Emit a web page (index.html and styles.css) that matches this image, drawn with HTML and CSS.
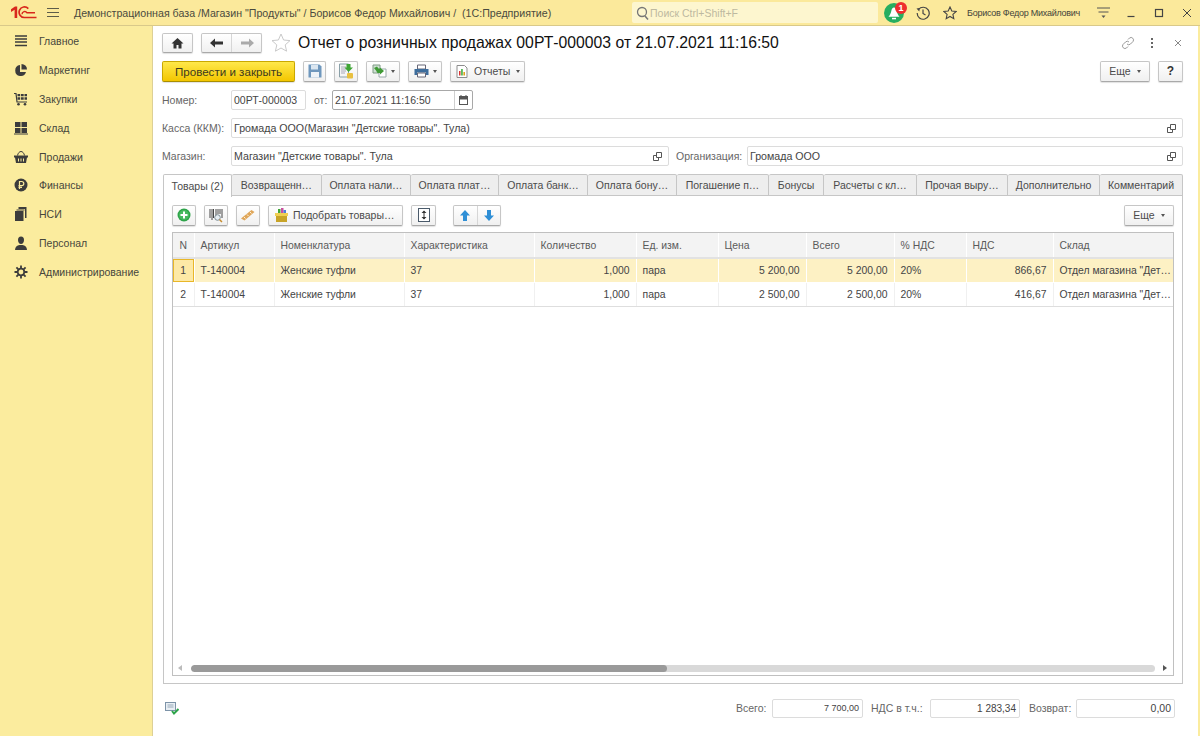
FILE: index.html
```html
<!DOCTYPE html>
<html lang="ru">
<head>
<meta charset="utf-8">
<title>Отчет о розничных продажах</title>
<link rel="stylesheet" href="styles.css">
</head>
<body>
<header class="topbar">
  <svg class="logo" width="26" height="13" viewBox="0 0 26 13"><path d="M0 3.200L4 .5h2.200V12H3.600V3.700L0 6z" fill="#d8281c"/><path d="M17.300 2.600A5.300 5.300 0 1 0 13.500 11.500H25.500" fill="none" stroke="#d8281c" stroke-width="1.700"/><path d="M11 8.200A2.700 2.700 0 0 1 16 6.800 H24" fill="none" stroke="#d8281c" stroke-width="1.400"/></svg>
  <svg class="burger" width="12" height="9" viewBox="0 0 12 9"><path d="M0 .5h12M0 4.500h12M0 8.500h12" stroke="#5c5c4a" stroke-width="1"/></svg>
  <div class="apptitle">Демонстрационная база /Магазин "Продукты" / Борисов Федор Михайлович /  (1С:Предприятие)</div>
  <div class="search">
    <svg width="13" height="14" viewBox="0 0 13 14"><circle cx="6" cy="6" r="4.500" fill="none" stroke="#777" stroke-width="1.300"/><path d="M9 10l3 3.500" stroke="#777" stroke-width="1.500"/></svg>
    <span>Поиск Ctrl+Shift+F</span>
  </div>
  <div class="bell">
    <svg width="20" height="20" viewBox="0 0 20 20"><circle cx="10" cy="10" r="10" fill="#27ae60"/><path d="M10 4.500c-1.500 0-2.300 1.500-2.700 3.500S6 12 4.500 13.800h11C14 12 13.100 10 12.700 8S11.500 4.500 10 4.500z" fill="#fff"/><rect x="8" y="14.800" width="4" height="1.500" fill="#fff"/></svg>
    <span class="badge">1</span>
  </div>
  <svg class="tbicon hist" width="14" height="14" viewBox="0 0 14 14"><path d="M2.500 3.500a6 6 0 1 1-1.300 3.500" fill="none" stroke="#444" stroke-width="1.200"/><path d="M.5 2.500L3.800 2l-.5 3.500z" fill="#444"/><path d="M7 3.500V7.500l2.500 1.500" fill="none" stroke="#444" stroke-width="1.200"/></svg>
  <svg class="tbicon fav" width="14" height="14" viewBox="0 0 14 14"><path d="M7 1l1.800 4 4.400.5-3.300 2.900.9 4.300L7 10.500l-3.800 2.200.9-4.300L.8 5.500 5.200 5z" fill="none" stroke="#444" stroke-width="1.100"/></svg>
  <div class="user">Борисов Федор Михайлович</div>
  <svg class="tbicon menu" width="13" height="12" viewBox="0 0 13 12"><path d="M0 1h13M1.500 5h10" stroke="#555" stroke-width="1"/><path d="M4.500 8.500h4L6.500 11z" fill="#555"/></svg>
  <svg class="tbicon min" width="10" height="10" viewBox="0 0 10 10"><path d="M1.500 8.500h7" stroke="#444" stroke-width="1.200"/></svg>
  <svg class="tbicon max" width="10" height="10" viewBox="0 0 10 10"><rect x="1.500" y="1.500" width="7" height="7" fill="none" stroke="#444" stroke-width="1.200"/></svg>
  <svg class="tbicon cls" width="10" height="10" viewBox="0 0 10 10"><path d="M1 1l8 8M9 1L1 9" stroke="#444" stroke-width="1"/></svg>
</header>

<div class="shell">
  <nav class="side">
    <a class="navitem"><svg width="14" height="14" viewBox="0 0 14 14"><path d="M1 2h12M1 5h12M1 8h12M1 11.500h12" stroke="#3c3c3c" stroke-width="1.600"/></svg><span>Главное</span></a>
    <a class="navitem"><svg width="14" height="14" viewBox="0 0 14 14"><path d="M6 2a5.500 5.500 0 1 0 6 7H6z" fill="#3c3c3c"/><path d="M7.500 1a5.500 5.500 0 0 1 5.500 5.500H7.500z" fill="#3c3c3c"/></svg><span>Маркетинг</span></a>
    <a class="navitem"><svg width="14" height="14" viewBox="0 0 14 14"><path d="M0 1.500h2l1 8.500h10" fill="none" stroke="#3c3c3c" stroke-width="1.200"/><path d="M3.500 2h2.700v2.300H3.500zM7 2h2.700v2.300H7zM10.500 2H13v2.300h-2.500zM3.500 5.200h2.700v2.600H3.500zM7 5.200h2.700v2.600H7zM10.500 5.200H13v2.600h-2.500z" fill="#3c3c3c"/><circle cx="4.500" cy="12.200" r="1.300" fill="#3c3c3c"/><circle cx="11" cy="12.200" r="1.300" fill="#3c3c3c"/></svg><span>Закупки</span></a>
    <a class="navitem"><svg width="14" height="14" viewBox="0 0 14 14"><path d="M1 1h5.500v5H1zM7.500 1H13v5H7.500zM1 7h5.500v5H1zM7.500 7H13v5H7.500z" fill="#3c3c3c"/><path d="M0 13h14" stroke="#3c3c3c"/></svg><span>Склад</span></a>
    <a class="navitem"><svg width="14" height="14" viewBox="0 0 14 14"><path d="M3.500 5.500C4 3 5.500 1.500 7 1.500S10 3 10.500 5.500" fill="none" stroke="#3c3c3c"/><path d="M0 5.500h14v2H13L12 13H2L1 7.500H0z" fill="#3c3c3c"/><path d="M4.500 8.500v3M7 8.500v3M9.500 8.500v3" stroke="#fbec9e"/></svg><span>Продажи</span></a>
    <a class="navitem"><svg width="14" height="14" viewBox="0 0 14 14"><circle cx="7" cy="7" r="6.500" fill="#3c3c3c"/><path d="M5.500 11V3.500h2.200a2 2 0 0 1 0 4.200H4.500M4.500 9.300h3.500" fill="none" stroke="#fbec9e" stroke-width="1.200"/></svg><span>Финансы</span></a>
    <a class="navitem"><svg width="14" height="14" viewBox="0 0 14 14"><path d="M4.500 0h8v11H11V2H4.500z" fill="#3c3c3c"/><path d="M2.500 2.500h8v1h-8z" fill="#3c3c3c"/><path d="M1 4h8.500v10H1z" fill="#3c3c3c"/></svg><span>НСИ</span></a>
    <a class="navitem"><svg width="14" height="14" viewBox="0 0 14 14"><path d="M4 4a3 3.500 0 0 1 6 0c0 2-1 4-3 4S4 6 4 4z" fill="#3c3c3c"/><path d="M1 14c0-3 2-4.500 4.500-5h3C11 9.500 13 11 13 14z" fill="#3c3c3c"/></svg><span>Персонал</span></a>
    <a class="navitem"><svg width="14" height="14" viewBox="0 0 14 14"><circle cx="7" cy="7" r="3.300" fill="none" stroke="#3c3c3c" stroke-width="1.800"/><path d="M7 .5v3M7 10.500v3M.5 7h3M10.500 7h3M2.400 2.400l2 2M9.600 9.600l2 2M11.600 2.400l-2 2M4.400 9.600l-2 2" stroke="#3c3c3c" stroke-width="1.800"/></svg><span>Администрирование</span></a>
  </nav>

  <main class="form">
    <div class="titlerow">
      <button class="btn iconbtn home"><svg width="13" height="12" viewBox="0 0 13 12"><path d="M6.500 1L.5 6.500h2V11.500h3V8h2v3.500h3V6.500h2z" fill="#333"/></svg></button>
      <div class="btn pair">
        <span class="seg"><svg width="14" height="10" viewBox="0 0 14 10"><path d="M0 5l5-4.500v3h8v3H5v3z" fill="#333"/></svg></span>
        <span class="seg"><svg width="14" height="10" viewBox="0 0 14 10"><path d="M14 5L9 .5v3H1v3h8v3z" fill="#aaa"/></svg></span>
      </div>
      <svg class="titlestar" width="20" height="19" viewBox="0 0 20 19"><path d="M10 1l2.600 6 6.400.6-4.800 4.300 1.400 6.300L10 15l-5.600 3.200 1.400-6.300L1 7.600 7.400 7z" fill="#fff" stroke="#c9c9c9"/></svg>
      <h1>Отчет о розничных продажах 00РТ-000003 от 21.07.2021 11:16:50</h1>
      <div class="winctl">
        <svg class="wlink" width="14" height="14" viewBox="0 0 14 14"><path d="M6 8a2.500 2.500 0 0 0 3.500 0l2.500-2.500A2.500 2.500 0 0 0 8.500 2L7 3.500M8 6a2.500 2.500 0 0 0-3.500 0L2 8.500A2.500 2.500 0 0 0 5.500 12L7 10.500" fill="none" stroke="#999"/></svg>
        <svg class="wdots" width="4" height="12" viewBox="0 0 4 12"><path d="M1 1h2v2H1zM1 5h2v2H1zM1 9h2v2H1z" fill="#666"/></svg>
        <svg class="wclose" width="8" height="8" viewBox="0 0 8 8"><path d="M1 1l6 6M7 1L1 7" stroke="#888"/></svg>
      </div>
    </div>

    <div class="cmdrow">
      <button class="btn primary">Провести и закрыть</button>
      <button class="btn icon22"><svg width="14" height="14" viewBox="0 0 14 14"><path d="M.5 .5h11L13.500 2.500V13.500H.5z" fill="#6f97bd"/><path d="M3 1h7v4.500H3z" fill="#dbe6f0"/><path d="M3 8h8v5.500H3z" fill="#eef3f8"/></svg></button>
      <button class="btn icon24"><svg width="16" height="16" viewBox="0 0 16 16"><path d="M1.500 1h9v13h-9z" fill="#f5f5f5" stroke="#8aa0a8"/><path d="M3 4h5M3 6h5M3 8h5M3 10h4" stroke="#aab"/><path d="M8.500 1h4v3.500H15L10.500 9 6.500 4.500h2z" fill="#3fa535"/><rect x="9" y="10" width="6" height="5.500" rx="1" fill="#e8c040"/></svg></button>
      <button class="btn icon34"><svg width="15" height="14" viewBox="0 0 15 14"><path d="M1 1h7v8H1z" fill="#cfe0d3" stroke="#7f9a85"/><path d="M7 5h7v8H7z" fill="#fff" stroke="#9aa"/><path d="M2 4l3-1.500 1.500 2H8V3.500L12 7l-4 3.500V9H5.500L4 6.500z" fill="#3f9a35"/></svg><i class="caret"></i></button>
      <button class="btn icon34"><svg width="15" height="14" viewBox="0 0 15 14"><path d="M3.500 1h8v4h-8z" fill="#fff" stroke="#667"/><path d="M.5 5h14v6H12V8.500H3V11H.5z" fill="#3d6d9c"/><path d="M3.500 9h8v4h-8z" fill="#fff" stroke="#667"/></svg><i class="caret"></i></button>
      <button class="btn reports"><svg width="12" height="13" viewBox="0 0 12 13"><path d="M1 .5h7.500L11 3v9.500H1z" fill="#fff" stroke="#8d8d8d"/><path d="M3 6h1.500v4.500H3z" fill="#d33"/><path d="M5.200 4h1.500v6.500H5.200z" fill="#3a3"/><path d="M7.400 7H9v3.500H7.400z" fill="#e0a020"/></svg><span>Отчеты</span><i class="caret"></i></button>
      <div class="spacer"></div>
      <button class="btn more">Еще<i class="caret"></i></button>
      <button class="btn help">?</button>
    </div>

    <div class="fieldrow r3">
      <label class="lbl">Номер:</label>
      <div class="input num">00РТ-000003</div>
      <label class="lbl ot">от:</label>
      <div class="input date active"><span>21.07.2021 11:16:50</span><span class="cal"><svg width="9" height="10" viewBox="0 0 9 10"><rect x=".5" y="1.500" width="8" height="8" fill="#fff" stroke="#555"/><path d="M.5 1.500h8v2.500h-8zM2 0v2M7 0v2" fill="#555" stroke="#555"/></svg></span></div>
    </div>
    <div class="fieldrow">
      <label class="lbl">Касса (ККМ):</label>
      <div class="input grow"><span>Громада ООО(Магазин "Детские товары". Тула)</span><svg class="open" width="9" height="9" viewBox="0 0 9 9"><path d="M3.500 .5h5v5h-5zM.5 3.500H3M.5 3.500v5h5V6" fill="none" stroke="#555"/></svg></div>
    </div>
    <div class="fieldrow">
      <label class="lbl">Магазин:</label>
      <div class="input shop"><span>Магазин "Детские товары". Тула</span><svg class="open" width="9" height="9" viewBox="0 0 9 9"><path d="M3.500 .5h5v5h-5zM.5 3.500H3M.5 3.500v5h5V6" fill="none" stroke="#555"/></svg></div>
      <label class="lbl org">Организация:</label>
      <div class="input grow"><span>Громада ООО</span><svg class="open" width="9" height="9" viewBox="0 0 9 9"><path d="M3.500 .5h5v5h-5zM.5 3.500H3M.5 3.500v5h5V6" fill="none" stroke="#555"/></svg></div>
    </div>

    <div class="tabs">
      <div class="tab on t69">Товары (2)</div>
      <div class="tab t90">Возвращенн…</div>
      <div class="tab t89">Оплата нали…</div>
      <div class="tab t88">Оплата плат…</div>
      <div class="tab t89">Оплата банк…</div>
      <div class="tab t89">Оплата бону…</div>
      <div class="tab t92">Погашение п…</div>
      <div class="tab t55">Бонусы</div>
      <div class="tab t93">Расчеты с кл…</div>
      <div class="tab t91">Прочая выру…</div>
      <div class="tab t92">Дополнительно</div>
      <div class="tab t83">Комментарий</div>
    </div>

    <section class="panel">
      <div class="tools">
        <button class="btn t24"><svg width="14" height="14" viewBox="0 0 14 14"><circle cx="7" cy="7" r="6.500" fill="#2ea44a"/><circle cx="7" cy="7" r="5" fill="#47b95f"/><path d="M3.500 7h7M7 3.500v7" stroke="#fff" stroke-width="2"/></svg></button>
        <button class="btn t24"><svg width="16" height="15" viewBox="0 0 16 15"><path d="M2 1v9M4 1v11M5.500 1v9M8 1v7M10 1v5M12 1v5M14 1v9" stroke="#444"/><circle cx="9.500" cy="9.500" r="2.800" fill="#e7eef3" stroke="#7c8b93"/><path d="M11.500 11.500l2.500 2.500" stroke="#c68b2c" stroke-width="1.500"/></svg></button>
        <button class="btn t24"><svg width="16" height="14" viewBox="0 0 16 14"><path d="M1 10.500L11.500 2l3 2L4.500 12.500z" fill="#dfa65a"/><path d="M4 9l1.500 1.500M7 6.500l1.500 1.500M10 4l1.500 1.500" stroke="#fff3d6"/></svg></button>
        <button class="btn pick"><svg width="15" height="16" viewBox="0 0 15 16"><path d="M4 2h2.500v4H4z" fill="#3fa535"/><path d="M7 1h2.500v5H7z" fill="#c94f9f"/><path d="M9.500 3H12v3H9.500z" fill="#4a7fd8"/><path d="M1 6h13v3H1z" fill="#f0cf52"/><path d="M2 9h11v6H2z" fill="#c8a428"/></svg><span>Подобрать товары…</span></button>
        <button class="btn t25"><svg width="12" height="14" viewBox="0 0 12 14"><rect x=".5" y=".5" width="11" height="13" fill="#fff" stroke="#4a5a6a"/><path d="M6 3v8" stroke="#333"/><path d="M3.500 5L6 2.500 8.500 5zM3.500 9L6 11.500 8.500 9z" fill="#333"/></svg></button>
        <div class="btn pair arrows">
          <span class="seg"><svg width="12" height="13" viewBox="0 0 12 13"><path d="M6 1l5 5.500H8V12H4V6.500H1z" fill="#2f8fd6"/></svg></span>
          <span class="seg"><svg width="12" height="13" viewBox="0 0 12 13"><path d="M6 12l5-5.500H8V1H4v5.500H1z" fill="#2f8fd6"/></svg></span>
        </div>
        <div class="spacer"></div>
        <button class="btn more2">Еще<i class="caret"></i></button>
      </div>

      <div class="grid">
        <table>
          <colgroup>
            <col class="c1"><col class="c2"><col class="c3"><col class="c4"><col class="c5"><col class="c6"><col class="c7"><col class="c8"><col class="c9"><col class="c10"><col class="c11">
          </colgroup>
          <thead>
            <tr><th class="n">N</th><th>Артикул</th><th>Номенклатура</th><th>Характеристика</th><th>Количество</th><th>Ед. изм.</th><th>Цена</th><th>Всего</th><th>% НДС</th><th>НДС</th><th>Склад</th></tr>
          </thead>
          <tbody>
            <tr class="sel"><td class="n cur">1</td><td>Т-140004</td><td>Женские туфли</td><td>37</td><td class="r">1,000</td><td>пара</td><td class="r">5 200,00</td><td class="r">5 200,00</td><td>20%</td><td class="r">866,67</td><td class="clip">Отдел магазина "Дет…</td></tr>
            <tr><td class="n">2</td><td>Т-140004</td><td>Женские туфли</td><td>37</td><td class="r">1,000</td><td>пара</td><td class="r">2 500,00</td><td class="r">2 500,00</td><td>20%</td><td class="r">416,67</td><td class="clip">Отдел магазина "Дет…</td></tr>
          </tbody>
        </table>
        <div class="fill"></div>
        <div class="hscroll">
          <i class="arr left"></i>
          <div class="track"><div class="thumb"></div></div>
          <i class="arr right"></i>
        </div>
      </div>
    </section>

    <footer class="totals">
      <svg class="posted" width="14" height="13" viewBox="0 0 14 13"><rect x=".5" y=".5" width="10" height="8" fill="#e8eef3" stroke="#7d93a8"/><path d="M2.500 3h6M2.500 5h6" stroke="#9ab"/><path d="M7 9l2 2.500L13.500 7" fill="none" stroke="#2ea44a" stroke-width="2"/></svg>
      <div class="spacer"></div>
      <label class="lbl l1">Всего:</label>
      <div class="input tot1">7 700,00</div>
      <label class="lbl l2">НДС в т.ч.:</label>
      <div class="input tot2">1 283,34</div>
      <label class="lbl l3">Возврат:</label>
      <div class="input tot3">0,00</div>
    </footer>
  </main>
</div>
</body>
</html>
```

FILE: styles.css
```css
* { box-sizing: border-box; }
html, body { margin: 0; padding: 0; }
body {
  width: 1200px; height: 736px; overflow: hidden;
  font-family: "Liberation Sans", Arial, sans-serif;
  font-size: 10.500px; color: #4b4b4b; background: #fbec9e;
  display: flex; flex-direction: column;
}
svg { display: block; flex: none; }
button { font: inherit; color: inherit; padding: 0; }

/* top bar */
.topbar {
  height: 26px; flex: none; display: flex; align-items: center;
  background: #fbe99b; border-bottom: 1px solid #d9c98a; padding-left: 11px;
}
.burger { margin-left: 10px; }
.apptitle { margin-left: 15px; width: 557px; white-space: pre; font-size: 10.650px; color: #4a4a3e; }
.search {
  width: 246px; height: 21px; margin-left: 1px; background: #fdf6cf; border-radius: 2px;
  display: flex; align-items: center; gap: 1px; padding-left: 4px; color: #bdb9a0; font-size: 10.500px;
}
.bell { position: relative; margin-left: 6px; width: 20px; height: 20px; }
.badge {
  position: absolute; right: -3px; top: -1px; width: 12px; height: 12px; border-radius: 50%;
  background: #ee2e2e; color: #fff; font-size: 9px; font-weight: bold; line-height: 12px; text-align: center;
}
.hist { margin-left: 12px; }
.fav { margin-left: 13px; }
.user { margin-left: 10px; width: 119px; font-size: 9px; letter-spacing: -.25px; white-space: nowrap; color: #44443a; }
.menu { margin-left: 11px; }
.min { margin-left: 16px; }
.max { margin-left: 18px; }
.cls { margin-left: 18px; }

/* shell */
.shell { flex: 1; display: flex; min-height: 0; }
.side { width: 153px; flex: none; padding-top: 1px; border-right: 1px solid #ddd096; background: #fbec9e; }
.navitem {
  height: 28.800px; display: flex; align-items: center; gap: 11px; padding-left: 14px;
  color: #46463c; font-size: 10.500px;
}
.navitem span { white-space: nowrap; }

.form {
  flex: none; width: 1045px; background: #fff; display: flex; flex-direction: column;
  padding: 6px 15px 0 9px; min-height: 0;
}

/* buttons */
.btn {
  background: linear-gradient(#fff, #f0f0f0); border: 1px solid #c6c6c6; border-bottom-color: #a9a9a9;
  border-radius: 2px; display: flex; align-items: center; justify-content: center;
  box-shadow: 0 1px 1px rgba(0,0,0,.12); flex: none; color: #4b4b4b;
}
.spacer { flex: 1; }
.caret {
  display: inline-block; width: 0; height: 0; margin-left: 6px;
  border: 2.500px solid transparent; border-top: 3px solid #555; border-bottom: 0;
}

/* title */
.titlerow { display: flex; align-items: center; height: 21px; flex: none; }
.home { width: 31px; height: 20px; }
.pair { margin-left: 8px; width: 61px; height: 20px; padding: 0; }
.seg { flex: 1; height: 100%; display: flex; align-items: center; justify-content: center; }
.seg + .seg { border-left: 1px solid #d6d6d6; }
.titlestar { margin-left: 9px; }
h1 {
  margin: 0 0 0 7px; font-size: 15.750px; font-weight: normal; color: #111; white-space: nowrap; flex: 1;
}
.winctl { display: flex; align-items: center; padding-right: 1px; }
.wdots { margin-left: 15px; }
.wclose { margin-left: 20px; }

/* commands */
.cmdrow { display: flex; align-items: center; height: 22px; margin-top: 7px; flex: none; gap: 8px; }
.primary {
  width: 133px; height: 21px; background: linear-gradient(#ffe84a, #f3c600);
  border-color: #c9a800; border-bottom-color: #a98e00; color: #3d3a1e; font-size: 11.600px;
}
.icon22 { width: 23px; height: 21px; }
.icon24 { width: 24px; height: 21px; }
.icon34 { width: 34px; height: 21px; }
.icon34 .caret { margin-left: 4px; }
.reports { width: 75px; height: 21px; gap: 6px; justify-content: flex-start; padding-left: 5px; }
.reports .caret { margin-left: 0; }
.more { width: 50px; height: 21px; }
.help { width: 25px; height: 21px; font-size: 12px; font-weight: bold; color: #333; }

/* fields */
.fieldrow { display: flex; align-items: center; height: 20px; margin-top: 8px; flex: none; }
.r3 { margin-top: 8px; }
.lbl { width: 69px; flex: none; color: #666; white-space: nowrap; }
.input {
  height: 20px; border: 1px solid #dcdcdc; border-radius: 2px; background: #fff; color: #444;
  display: flex; align-items: center; padding-left: 2px; white-space: nowrap; flex: none;
}
.grow { flex: 1; justify-content: space-between; padding-right: 6px; font-size: 10.650px; }
.num { width: 75px; }
.ot { width: 18px; margin-left: 8px; }
.date { width: 141px; border-color: #a8a8a8; justify-content: space-between; padding-right: 0; }
.cal {
  width: 18px; height: 100%; border-left: 1px solid #cfcfcf; display: flex; align-items: center; justify-content: center;
}
.shop { width: 438px; justify-content: space-between; padding-right: 6px; font-size: 10.650px; }
.org { width: 71px; margin-left: 7px; }

/* tabs */
.tabs { display: flex; height: 23px; margin-top: 7px; flex: none; position: relative; z-index: 1; margin-left: 1px; }
.tab {
  height: 22px; background: #eeeeee; border: 1px solid #c6c6c6; border-left: 0; border-radius: 2px 2px 0 0;
  display: flex; align-items: center; justify-content: center; white-space: nowrap; color: #4b4b4b; flex: none; margin-top: 1px;
}
.tab.on { height: 23px; background: #fff; border-left: 1px solid #c6c6c6; border-bottom: 0; }
.t69 { width: 69px; } .t90 { width: 90px; } .t89 { width: 89px; } .t88 { width: 88px; }
.t92 { width: 92px; } .t55 { width: 55px; } .t93 { width: 93px; } .t91 { width: 91px; } .t83 { width: 83px; }

.panel {
  flex: none; height: 489px; border: 1px solid #c6c6c6; margin-top: -1px; margin-left: 1px; width: 1020px;
  padding: 8px 8px 7px 8px; display: flex; flex-direction: column; min-height: 0;
}
.tools { display: flex; align-items: center; height: 22px; gap: 8px; flex: none; }
.t24 { width: 24px; height: 21px; }
.pick { width: 135px; height: 21px; gap: 3px; justify-content: flex-start; padding-left: 5px; }
.pick span { margin-left: 1px; }
.t25 { width: 25px; height: 21px; }
.arrows { margin-left: 9px; width: 48px; height: 21px; }
.more2 { width: 50px; height: 21px; }

/* grid */
.grid {
  flex: 1; margin-top: 6px; border: 1px solid #c0c0c0; display: flex; flex-direction: column; min-height: 0; overflow: hidden;
}
table { border-collapse: collapse; table-layout: fixed; width: 1000px; flex: none; font-size: 10.400px; }
.c1 { width: 21px; } .c2 { width: 80px; } .c3 { width: 130px; } .c4 { width: 130px; }
.c5 { width: 102px; } .c6 { width: 82px; } .c7 { width: 88px; } .c8 { width: 88px; }
.c9 { width: 72px; } .c10 { width: 87px; } .c11 { width: 120px; }
th {
  height: 25px; background: #f3f3f3; font-weight: normal; text-align: left; padding: 0 6px; color: #5a5a5a;
  border-right: 1px solid #fff; border-bottom: 2px solid #e2e2e2; white-space: nowrap;
}
td {
  height: 24px; padding: 0 6px; color: #444; border-right: 1px solid #f0f0f0; border-bottom: 1px solid #dedede;
  white-space: nowrap; overflow: hidden;
}
th.n, td.n { text-align: center; padding: 0; }
.r { text-align: right; }
.clip { padding-right: 0; }
.sel td { background: #fdf1c4; border-right-color: #fff; border-bottom-color: #fff; }
.sel td.cur { background: #fde9a6; box-shadow: inset 0 0 0 1px #e9b728; }
.fill { flex: 1; }
.hscroll { height: 12px; flex: none; display: flex; align-items: center; padding: 0 6px 2px 5px; }
.arr { width: 0; height: 0; border: 3px solid transparent; flex: none; }
.arr.left { border-right: 4px solid #bbb; border-left: 0; }
.arr.right { border-left: 4px solid #555; border-right: 0; margin-left: 8px; }
.track { flex: 1; height: 7px; margin-left: 9px; background: #d9d9d9; border-radius: 4px; overflow: hidden; }
.thumb { width: 476px; height: 100%; background: #9a9a9a; border-radius: 4px; }

/* footer */
.totals { flex: none; height: 20px; margin-top: 14px; display: flex; align-items: center; padding-right: 8px; }
.posted { margin-left: 3px; }
.totals .input { justify-content: flex-end; padding-right: 3px; height: 19px; }
.l1 { width: 36px; }
.l2 { width: 59px; margin-left: 8px; }
.l3 { width: 47px; margin-left: 9px; }
.tot1 { width: 91px; font-size: 9px; }
.tot2 { width: 90px; font-size: 10px; }
.tot3 { width: 99px; }
```
